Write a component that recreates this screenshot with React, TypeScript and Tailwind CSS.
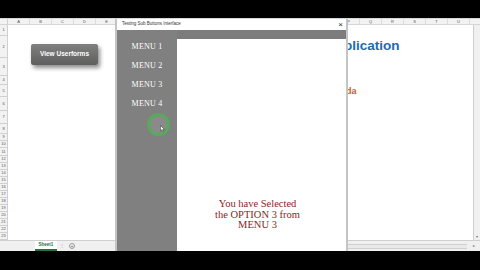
import React from "react";

const cols = "ABCDEFGHIJKLMNOPQRSTU".split("");

// columns F..O sit behind the userform, so their labels are left out
const hiddenCols = "FGHIJKLMNO";

const rows = [
  { n: 1, h: "h-[11px]" },
  { n: 2, h: "h-[22px]" },
  { n: 3, h: "h-[18px]" },
  { n: 4, h: "h-[9px]" },
  { n: 5, h: "h-[12px]" },
  { n: 6, h: "h-[14px]" },
  { n: 7, h: "h-[13px]" },
  { n: 8, h: "h-[10px]" },
  { n: 9, h: "h-[7px]" },
  { n: 10, h: "h-[7px]" },
  { n: 11, h: "h-[8px]" },
  { n: 12, h: "h-[7px]" },
  { n: 13, h: "h-[7px]" },
  { n: 14, h: "h-[7px]" },
  { n: 15, h: "h-[7px]" },
  { n: 16, h: "h-[7px]" },
  { n: 17, h: "h-[7px]" },
  { n: 18, h: "h-[7px]" },
  { n: 19, h: "h-[7px]" },
  { n: 20, h: "h-[7px]" },
  { n: 21, h: "h-[7px]" },
  { n: 22, h: "h-[7px]" },
  { n: 23, h: "h-[7px]" },
];

const menus = ["MENU 1", "MENU 2", "MENU 3", "MENU 4"];

function RowContent({ n }: { n: number }) {
  if (n === 2) {
    return (
      <span className="pl-[336px] pb-[3px] text-[13.5px] font-bold leading-none text-[#2369ad] font-['Liberation_Sans',sans-serif]">
        plication
      </span>
    );
  }
  if (n === 5) {
    return (
      <span className="pl-[338px] text-[9px] font-bold leading-none text-[#c4601a] font-['Liberation_Sans',sans-serif]">
        da
      </span>
    );
  }
  return null;
}

function Userform() {
  return (
    <div className="absolute left-[115px] top-[1px] w-[233px] h-[232px] flex flex-col bg-white border-l-2 border-r-2 border-[#c4c4c4]">
      <div className="h-[11px] shrink-0 flex items-center justify-between pl-[5px] pr-[3px] bg-white">
        <span className="text-[4.5px] leading-none text-[#333]">Testing Sub Buttons Interface</span>
        <span className="text-[8px] leading-none text-[#222]">×</span>
      </div>
      <div className="flex flex-1">
        <div className="w-[60px] shrink-0 bg-[#808080] flex flex-col items-center pt-[7.5px] font-['Liberation_Serif',serif]">
          {menus.map((m) => (
            <div key={m} className="h-[19px] flex items-center text-[8px] leading-none text-white tracking-[0.2px]">
              {m}
            </div>
          ))}
        </div>
        <div className="flex-1 flex flex-col">
          <div className="h-[9px] shrink-0 bg-[#7c7c7c]" />
          <div className="flex-1 bg-white pt-[160px] pr-[8px] text-center text-[10.5px] leading-[10.5px] text-[#8b1e1e] font-['Liberation_Serif',serif]">
            <p>You have Selected</p>
            <p>the OPTION 3 from</p>
            <p>MENU 3</p>
          </div>
        </div>
      </div>
      {/* mouse highlight */}
      <div className="absolute left-[29.5px] top-[94px] w-[23px] h-[23px] rounded-full border-[3px] border-[#4caf50]/80 bg-[#8a8a8a]" />
      <svg className="absolute left-[43px] top-[106px]" width="5" height="7" viewBox="0 0 5 7">
        <path d="M0.5 0.5 L0.5 6 L1.8 4.8 L2.8 6.6 L3.5 6.2 L2.6 4.5 L4.3 4.4 Z" fill="#fff" stroke="#333" strokeWidth="0.5" />
      </svg>
    </div>
  );
}

export default function App() {
  return (
    <div className="w-[480px] h-[270px] bg-black flex flex-col overflow-hidden font-['Liberation_Sans',sans-serif]">
      <div className="h-[18px] shrink-0" />
      <div className="relative h-[233px] shrink-0 bg-white flex flex-col">
        {/* column headers */}
        <div className="h-[7px] shrink-0 flex bg-[#f2f2f2] border-t border-b border-[#d6d6d6]">
          <div className="w-[8px] shrink-0 border-r border-[#d0d0d0]" />
          {cols.map((c) => (
            <div key={c} className="w-[22px] shrink-0 border-r border-[#dcdcdc] flex items-center justify-center text-[4px] leading-none text-[#555]">
              {hiddenCols.includes(c) ? null : c}
            </div>
          ))}
          <div className="flex-1" />
        </div>

        {/* sheet body */}
        <div className="h-[215px] shrink-0 flex">
          <div className="flex-1 flex flex-col">
            {rows.map((r) => (
              <div key={r.n} className={r.h + " shrink-0 flex"}>
                <div className="w-[8px] shrink-0 bg-[#f2f2f2] border-r border-b border-[#d0d0d0] flex items-center justify-center text-[4px] leading-none text-[#555]">
                  {r.n}
                </div>
                <div className="flex-1 flex items-center">
                  <RowContent n={r.n} />
                </div>
              </div>
            ))}
          </div>
          <div className="w-[7px] shrink-0 bg-[#f0f0f0] border-l border-[#cfcfcf] flex flex-col justify-end items-center pb-[1px]">
            <span className="text-[4px] leading-none text-[#777]">▾</span>
          </div>
        </div>

        {/* sheet tabs */}
        <div className="h-[11px] shrink-0 flex items-stretch bg-[#f0f0f0] border-t border-[#cfcfcf]">
          <div className="w-[35px] shrink-0" />
          <div className="w-[22px] shrink-0 bg-white border-b-2 border-[#217346] flex items-center justify-center text-[4.5px] font-bold leading-none text-[#217346]">
            Sheet1
          </div>
          <div className="w-[10px] shrink-0 flex items-center justify-center text-[4px] text-[#999]">⋮</div>
          <div className="w-[10px] shrink-0 flex items-center justify-center">
            <div className="w-[6px] h-[6px] rounded-full border border-[#999] flex items-center justify-center text-[5px] leading-none text-[#777]">+</div>
          </div>
          <div className="flex-1" />
          <div className="w-[120px] shrink-0 flex flex-col justify-center">
            <div className="h-[5px] border-y border-[#cfcfcf] bg-[#e9e9e9]" />
          </div>
          <div className="w-[13px] shrink-0 flex items-center justify-center text-[4px] text-[#777]">▸</div>
        </div>

        {/* floating shape */}
        <div className="absolute left-[31px] top-[26px] w-[67px] h-[21px] rounded-[2px] bg-gradient-to-b from-[#808080] to-[#5f5f5f] shadow-[2px_3px_4px_rgba(0,0,0,0.45)] flex items-center justify-center">
          <span className="text-[6.5px] font-bold leading-none text-white">View Userforms</span>
        </div>

        <Userform />
      </div>
      <div className="flex-1" />
    </div>
  );
}
